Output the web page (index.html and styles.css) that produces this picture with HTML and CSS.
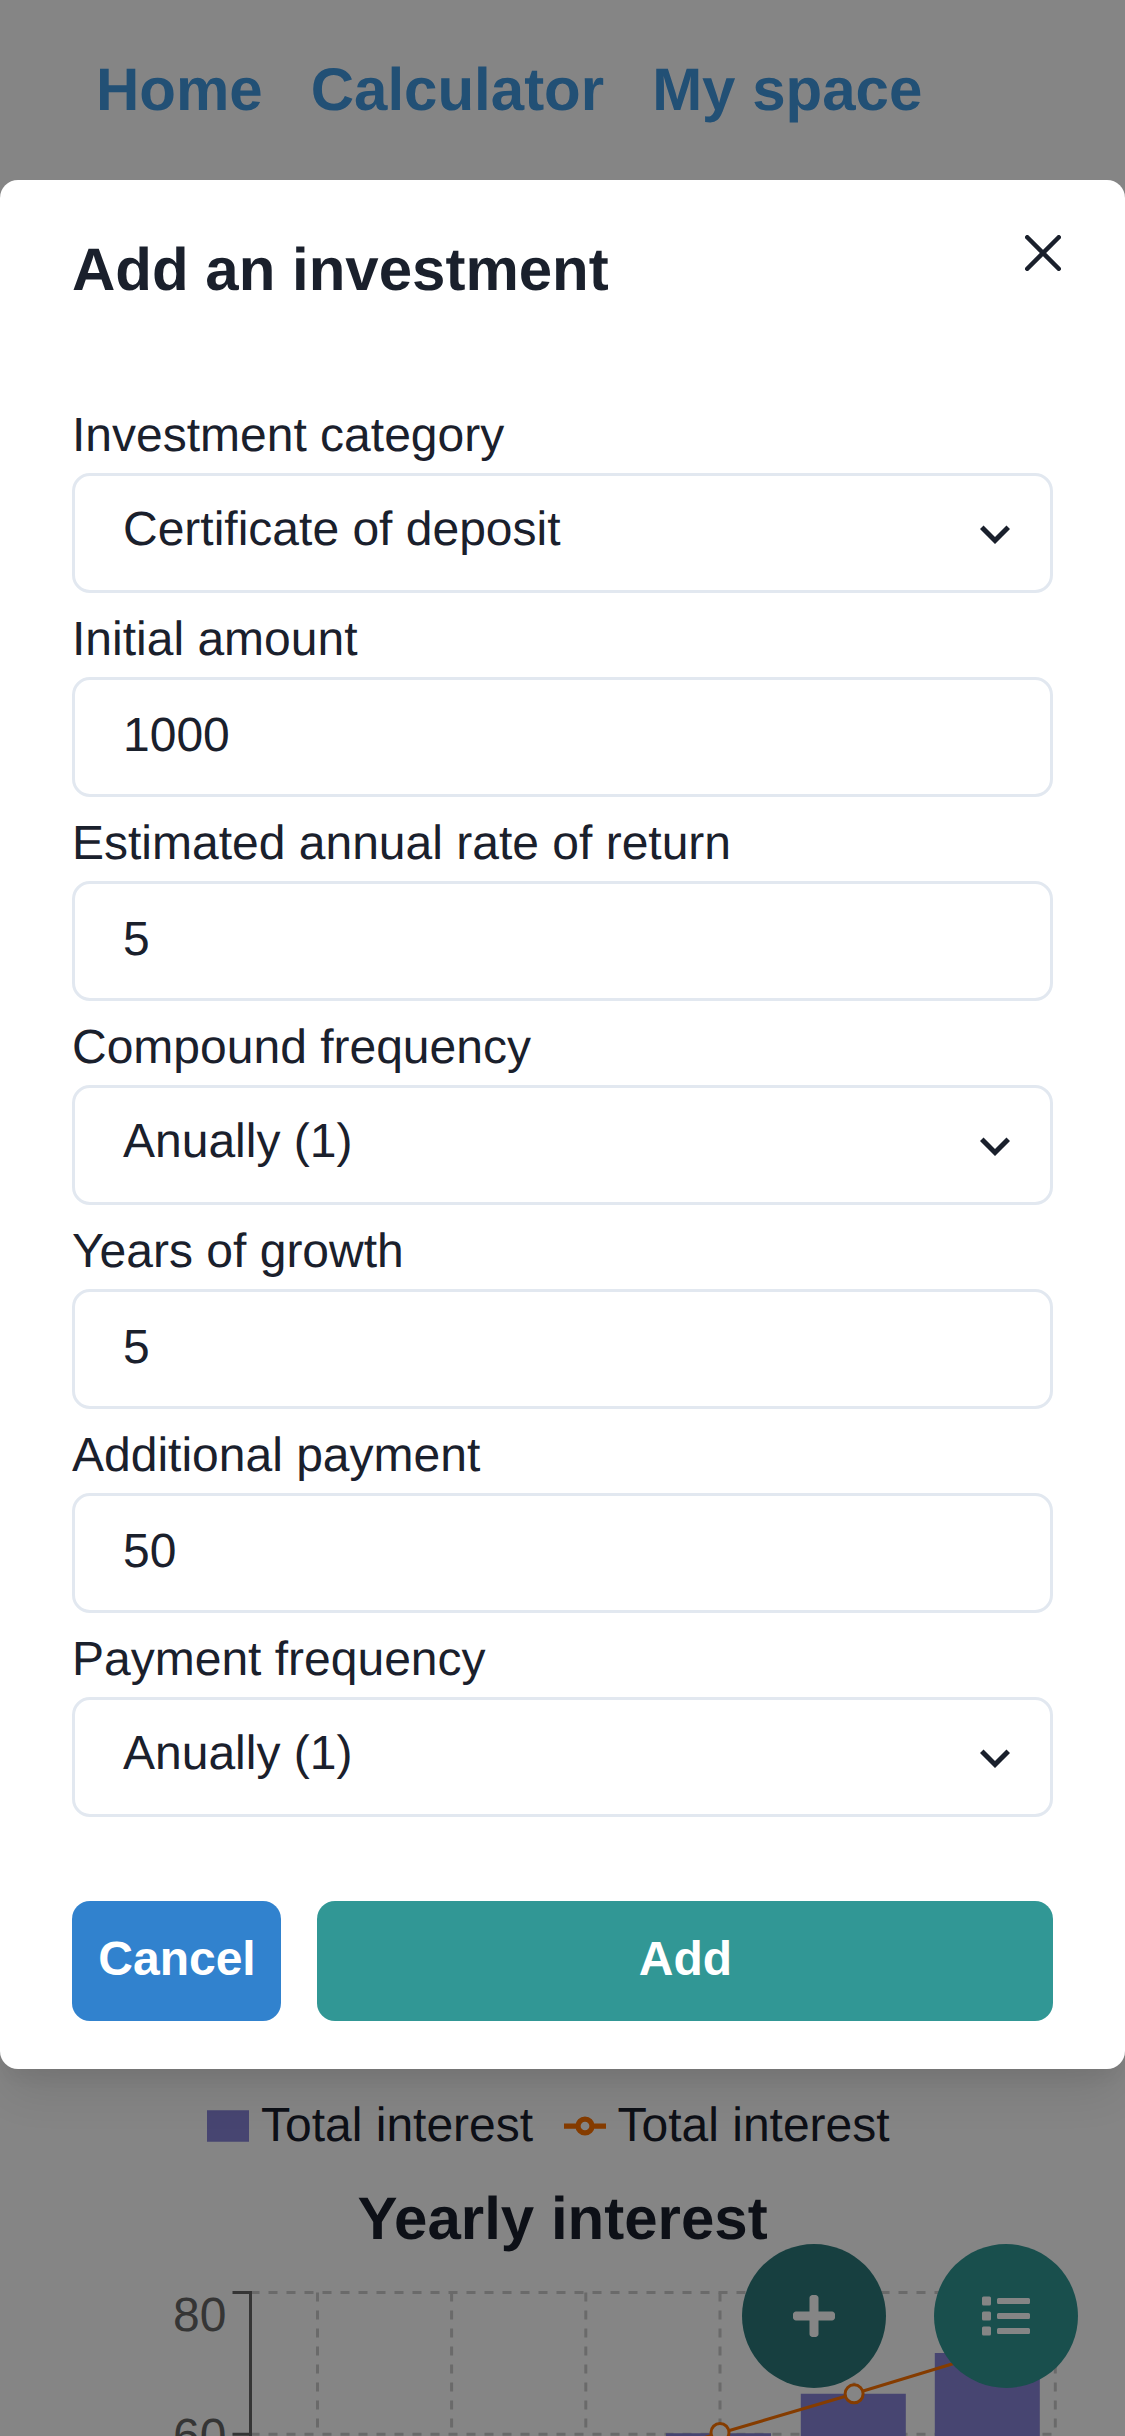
FILE: index.html
```html
<!DOCTYPE html>
<html lang="en">
<head>
<meta charset="utf-8">
<title>Add an investment</title>
<link rel="stylesheet" href="styles.css">
</head>
<body>
<div class="page">
  <nav class="nav"><a>Home</a><a>Calculator</a><a>My space</a></nav>
  <main class="results">
    <div class="legend">
      <span class="legend-item"><svg class="legend-icon" viewBox="0 0 32 32"><path d="M0 4h32v24H0z" fill="#8884d8"/></svg>Total interest</span>
      <span class="legend-item"><svg class="legend-icon" viewBox="0 0 32 32" fill="none" stroke="#ff7300" stroke-width="4"><path d="M0 16h10.667A5.333 5.333 0 1 1 21.333 16H32M21.333 16A5.333 5.333 0 1 1 10.667 16"/></svg>Total interest</span>
    </div>
    <h2 class="chart-title">Yearly interest</h2>
    <svg class="chart" viewBox="0 2274 1125 162">
      <g stroke="#ccc" stroke-width="3" stroke-dasharray="9 9">
        <path d="M250.5 2292.5H1055.5M250.5 2434.2H1055.5"/>
        <path d="M317.5 2292.5V2700M451.6 2292.5V2700M585.8 2292.5V2700M720 2292.5V2700M854.1 2292.5V2700M988.2 2292.5V2700M1055.3 2292.5V2700"/>
      </g>
      <g fill="#8884d8">
        <path d="M666 2433.3h105v10H666zM800.8 2393.8h105v50h-105zM934.8 2353h105v90h-105z"/>
      </g>
      <path d="M232.5 2292.5h18V2436M232.5 2434.2h18" fill="none" stroke="#666" stroke-width="3"/>
      <g fill="#666" font-size="48" text-anchor="end"><text x="226.5" y="2330.5">80</text><text x="226.5" y="2452">60</text></g>
      <path d="M585.8 2470L720 2433.3 854.1 2393.8 988.2 2353" fill="none" stroke="#ff7300" stroke-width="3"/>
      <g fill="#fff" stroke="#ff7300" stroke-width="3"><circle cx="720" cy="2432.5" r="9"/><circle cx="854.1" cy="2393.8" r="9"/></g>
    </svg>
  </main>
  <div class="fabs">
    <button class="fab fab-active" aria-label="Add"><svg width="42" height="48" viewBox="0 0 448 512"><path d="M416 208H272V64c0-17.67-14.33-32-32-32h-32c-17.67 0-32 14.33-32 32v144H32c-17.67 0-32 14.33-32 32v32c0 17.67 14.33 32 32 32h144v144c0 17.67 14.33 32 32 32h32c17.67 0 32-14.33 32-32V304h144c17.67 0 32-14.33 32-32v-32c0-17.67-14.33-32-32-32z"/></svg></button>
    <button class="fab" aria-label="List"><svg width="48" height="48" viewBox="0 0 512 512"><path d="M80 368H16a16 16 0 0 0-16 16v64a16 16 0 0 0 16 16h64a16 16 0 0 0 16-16v-64a16 16 0 0 0-16-16zm0-320H16A16 16 0 0 0 0 64v64a16 16 0 0 0 16 16h64a16 16 0 0 0 16-16V64a16 16 0 0 0-16-16zm0 160H16a16 16 0 0 0-16 16v64a16 16 0 0 0 16 16h64a16 16 0 0 0 16-16v-64a16 16 0 0 0-16-16zm416 176H176a16 16 0 0 0-16 16v32a16 16 0 0 0 16 16h320a16 16 0 0 0 16-16v-32a16 16 0 0 0-16-16zm0-320H176a16 16 0 0 0-16 16v32a16 16 0 0 0 16 16h320a16 16 0 0 0 16-16V80a16 16 0 0 0-16-16zm0 160H176a16 16 0 0 0-16 16v32a16 16 0 0 0 16 16h320a16 16 0 0 0 16-16v-32a16 16 0 0 0-16-16z"/></svg></button>
  </div>
</div>
<div class="overlay">
  <section class="modal" role="dialog" aria-modal="true">
    <header class="modal-head"><h1>Add an investment</h1>
      <svg class="close" viewBox="0 0 36 36"><path d="M2.25 2.25l31.5 31.5M33.75 2.25l-31.5 31.5"/></svg>
    </header>
    <form class="form">
      <div class="field"><label>Investment category</label><div class="control select"><span>Certificate of deposit</span><svg class="chevron" viewBox="0 0 24 24"><path d="M16.59 8.59L12 13.17 7.41 8.59 6 10l6 6 6-6z"/></svg></div></div>
      <div class="field"><label>Initial amount</label><div class="control"><span>1000</span></div></div>
      <div class="field"><label>Estimated annual rate of return</label><div class="control"><span>5</span></div></div>
      <div class="field"><label>Compound frequency</label><div class="control select"><span>Anually (1)</span><svg class="chevron" viewBox="0 0 24 24"><path d="M16.59 8.59L12 13.17 7.41 8.59 6 10l6 6 6-6z"/></svg></div></div>
      <div class="field"><label>Years of growth</label><div class="control"><span>5</span></div></div>
      <div class="field"><label>Additional payment</label><div class="control"><span>50</span></div></div>
      <div class="field"><label>Payment frequency</label><div class="control select"><span>Anually (1)</span><svg class="chevron" viewBox="0 0 24 24"><path d="M16.59 8.59L12 13.17 7.41 8.59 6 10l6 6 6-6z"/></svg></div></div>
    </form>
    <footer class="actions"><button class="btn cancel">Cancel</button><button class="btn add">Add</button></footer>
  </section>
</div>
</body>
</html>
```
FILE: styles.css
```css
* { box-sizing: border-box; margin: 0; padding: 0; }
html, body { height: 2436px; overflow: hidden; }
body {
  background: #fff;
  color: #1a202c;
  font: 48px/72px "Liberation Sans", Arial, sans-serif;
  text-rendering: geometricPrecision;
}
svg { display: block; flex: none; }
button { border: 0; font: inherit; }

.page { height: 2436px; display: flex; flex-direction: column; justify-content: space-between; }
.nav { display: flex; gap: 48px; padding: 45px 96px; font-size: 60px; line-height: 90px; font-weight: 700; color: #4299e1; }
.legend { display: flex; gap: 29.5px; height: 71px; padding-left: 207px; }
.legend-item { display: flex; align-items: center; gap: 12px; width: 327px; height: 72px; white-space: nowrap; }
.legend-icon { width: 42px; height: 42px; margin-top: -1px; }
.chart-title { padding-top: 13px; font-size: 60px; line-height: 90px; text-align: center; height: 113px; }
.chart { width: 1125px; height: 162px; overflow: hidden; }

.fabs { position: absolute; right: 47.5px; top: 2244px; display: flex; gap: 48px; }
.fab { width: 144px; height: 144px; border-radius: 50%; background: #319795; display: flex; align-items: center; justify-content: center; }
.fab-active { background: #2c7a7b; }
.fab svg { fill: #fff; }

.overlay { position: absolute; inset: 0; padding-top: 180px; background: rgba(0, 0, 0, .48); overflow: hidden; }
.modal {
  height: 1888.5px;
  background: #fff;
  border-radius: 18px;
  box-shadow: 0 30px 45px -9px rgba(0, 0, 0, .1), 0 12px 18px -6px rgba(0, 0, 0, .05);
}
.modal-head { display: flex; justify-content: space-between; padding: 45px 64px 0 72px; height: 220px; }
.modal-head h1 { font-size: 60px; line-height: 90px; }
.close { width: 36px; height: 36px; margin-top: 10px; fill: none; stroke: #1a202c; stroke-width: 4.5; stroke-linecap: round; }

.form { display: flex; flex-direction: column; gap: 12px; padding: 0 72px; }
.field { height: 192px; display: flex; flex-direction: column; justify-content: space-between; }
.field label { display: block; height: 72px; }
.control { height: 120px; margin-bottom: -0.5px; flex: none; display: flex; align-items: center; justify-content: space-between; border: 3px solid #e2e8f0; border-radius: 18px; padding: 0 25.5px 2px 48px; }
.select { padding-bottom: 0; }
.select span { margin-top: -5px; }
.chevron { width: 60px; height: 60px; margin-top: 3px; fill: #1a202c; }

.actions { display: flex; gap: 36px; padding: 84.5px 72px 0; }
.btn { height: 120px; padding-bottom: 3px; border-radius: 18px; color: #fff; font-weight: 700; }
.cancel { width: 209px; padding-left: 1px; background: #3182ce; }
.add { flex: 1; padding-left: 1px; background: #319795; }
```
